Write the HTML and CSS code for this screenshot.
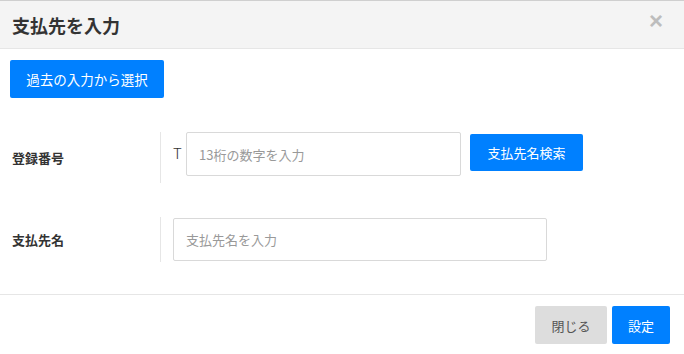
FILE: index.html
```html
<!DOCTYPE html>
<html lang="ja">
<head>
  <meta charset="UTF-8">
  <meta name="viewport" content="width=device-width, initial-scale=1.0">
  <title>支払先を入力</title>
  <link rel="stylesheet" href="styles.css">
</head>
<body>
  <div class="modal">
    <!-- Header -->
    <header class="modal-header">
      <h1 class="modal-title">支払先を入力</h1>
      <button class="modal-close" type="button">&times;</button>
    </header>

    <!-- Body -->
    <div class="modal-body">
      <button class="btn btn-primary btn-history" type="button">過去の入力から選択</button>

      <div class="form-row form-row-number">
        <label class="form-label">登録番号</label>
        <div class="form-field">
          <span class="prefix">T</span>
          <input class="form-input input-number" type="text" placeholder="13桁の数字を入力">
          <button class="btn btn-primary btn-search" type="button">支払先名検索</button>
        </div>
      </div>

      <div class="form-row">
        <label class="form-label">支払先名</label>
        <div class="form-field">
          <input class="form-input input-name" type="text" placeholder="支払先名を入力">
        </div>
      </div>
    </div>

    <!-- Footer -->
    <footer class="modal-footer">
      <button class="btn btn-gray" type="button">閉じる</button>
      <button class="btn btn-primary" type="button">設定</button>
    </footer>
  </div>
</body>
</html>
```

FILE: styles.css
```css
:root {
  --primary: #0080ff;
  --border: #e6e6e6;
  --text: #333333;
  --muted: #999999;
}

* {
  margin: 0;
  padding: 0;
  box-sizing: border-box;
  font-family: 'Noto Sans CJK JP', 'Noto Sans', sans-serif;
}

body {
  background-color: white;
  color: var(--text);
}

.modal {
  width: 684px;
  height: 354px;
  border-top: 1px solid #cfcfcf;
  display: flex;
  flex-direction: column;
}

.modal-header {
  height: 48px;
  background-color: #f4f4f4;
  border-bottom: 1px solid var(--border);
  display: flex;
  justify-content: space-between;
  align-items: center;
  padding: 0 21px 0 12px;
}

.modal-title {
  font-size: 18px;
  font-weight: 700;
  color: #333;
}

.modal-close {
  background: none;
  border: none;
  font-family: 'Liberation Sans', sans-serif;
  font-size: 24px;
  font-weight: 700;
  color: #bdbdbd;
  line-height: 1;
  margin-top: -8px;
  cursor: pointer;
}

.modal-body {
  padding: 11px 12px 0 10px;
  flex: 1;
}

.btn {
  border: none;
  border-radius: 2px;
  font-size: 13px;
  height: 38px;
  padding: 0 16px;
  cursor: pointer;
}

.btn-primary {
  background-color: var(--primary);
  color: white;
}

.btn-gray {
  background-color: #dddddd;
  color: #555;
  width: 72px;
}

.btn-history {
  width: 154px;
  font-size: 13.5px;
}

.form-row {
  display: flex;
  align-items: center;
  margin-top: 34px;
}

.form-label {
  width: 150px;
  padding-left: 2px;
  font-size: 13px;
  font-weight: 700;
  color: #333;
}

.form-field {
  border-left: 1px solid var(--border);
  padding-left: 12px;
  display: flex;
  align-items: center;
  min-height: 45px;
}

.form-row-number .form-field {
  align-items: flex-start;
  min-height: 51px;
}

.prefix {
  font-size: 15px;
  font-weight: 300;
  color: #333;
  margin-top: 10px;
  width: 13px;
}

.form-input {
  height: 44px;
  border: 1px solid #d9d9d9;
  border-radius: 2px;
  padding: 0 12px;
  font-size: 13px;
  color: var(--text);
  outline: none;
}

.form-input::placeholder {
  color: var(--muted);
}

.input-number {
  width: 275px;
}

.input-name {
  width: 374px;
  height: 43px;
}

.btn-search {
  width: 113px;
  height: 37px;
  margin: 2px 0 0 9px;
}

.modal-footer {
  border-top: 1px solid var(--border);
  padding: 11px 14px 10px;
  display: flex;
  justify-content: flex-end;
  gap: 5px;
}

.modal-footer .btn-primary {
  width: 58px;
  padding: 0;
}
```
